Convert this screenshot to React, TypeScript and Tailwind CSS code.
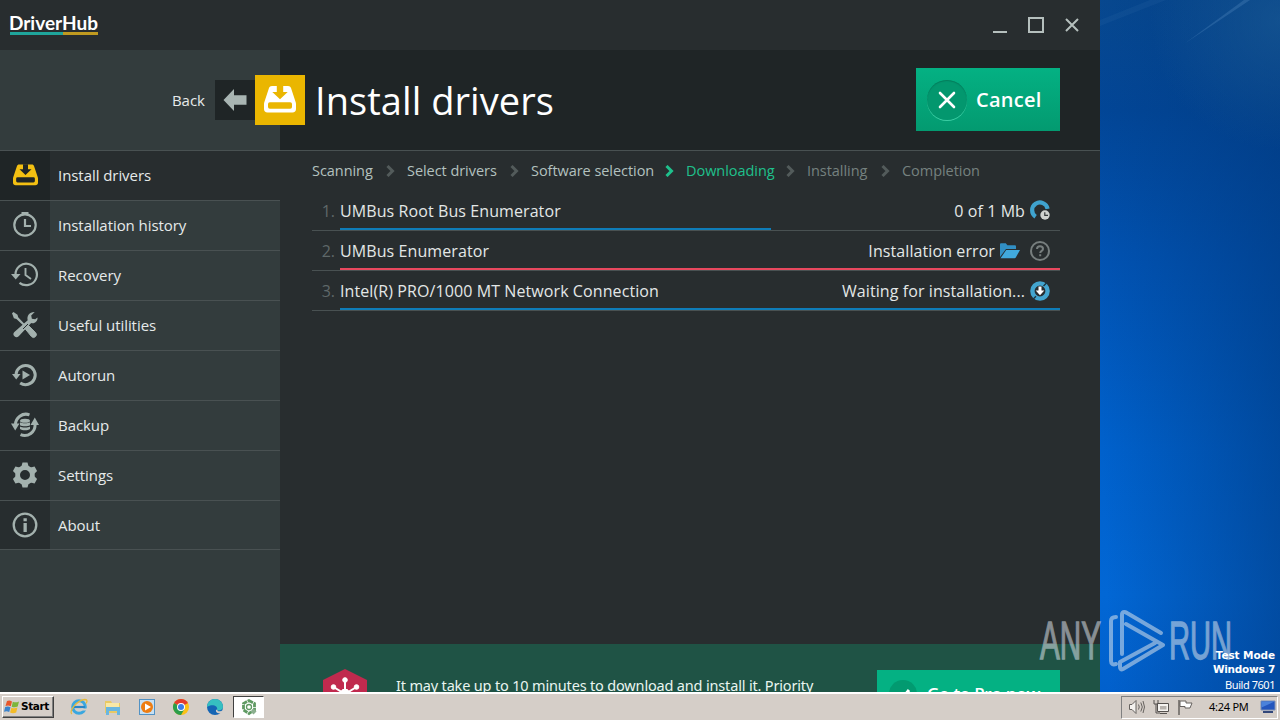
import { useId, type ReactNode } from "react";

/* ---------- icons ---------- */

function DriveIcon({ size = 26, arrow }: { size?: number; arrow: string }) {
  return (
    <svg width={size} height={size} viewBox="0 0 32 32" fill="currentColor">
      <path d="M8 2h16c1.600 0 2.600.7 3 2.100l4.700 14.100c.2.700.3 1.300.3 2V25c0 2.200-1.300 3.500-3.500 3.500h-25C1.300 28.500 0 27.200 0 25v-4.800c0-.7.1-1.300.3-2L5 4.100C5.400 2.700 6.400 2 8 2Z" />
      <path d="M12.800 1.500h6.400V8h4.500L16 15.300 8.300 8h4.500Z" fill={arrow} />
      <rect x="4" y="18.300" width="24" height="6.500" rx="1.800" fill={arrow} />
    </svg>
  );
}

function StopwatchIcon() {
  return (
    <svg width="26" height="26" viewBox="0 0 26 26" fill="none" stroke="currentColor" strokeWidth="2.200">
      <circle cx="13" cy="13" r="10.700" />
      <path d="M9.500 1.300h7" strokeWidth="2.600" />
      <path d="M13 7v7h6" />
    </svg>
  );
}

function RecoveryIcon() {
  return (
    <svg width="28" height="26" viewBox="0 0 28 26" fill="none" stroke="currentColor" strokeWidth="2.200">
      <path d="M4.500 12.500A10.700 10.700 0 1 1 8.500 20.800" />
      <path d="M0 12h9.500L4.700 17.500Z" fill="currentColor" stroke="none" />
      <path d="M14.500 6v7l5.500 4" strokeWidth="1.900" />
    </svg>
  );
}

function ToolsIcon() {
  return (
    <svg width="28" height="28" viewBox="0 0 28 28" fill="currentColor">
      <path d="M1 2.200 2.500 1l4 2.700.7 2.600 7 7.400-1.300 1.300-7.500-7-2.500-.8Z" />
      <path d="m14.200 17.800 3.300-3.300 7 7.100a2.800 2.800 0 0 1-4 4Z" stroke="currentColor" strokeWidth="1" />
      <path d="M26 6.500c.4 3.600-2.800 6.600-6.300 5.600L7.200 25.200a2.900 2.900 0 0 1-4.300-4.200L16.200 9.300C15 5 18 .9 23.200 1.100l-3.500 3.400.7 3.200 3.300.6Z" transform="translate(.5 0)" />
      <path d="m12 18 5-5" stroke="#272d2f" strokeWidth="1" />
    </svg>
  );
}

function AutorunIcon() {
  return (
    <svg width="26" height="26" viewBox="0 0 26 26" fill="none" stroke="currentColor" strokeWidth="3">
      <path d="M4 12.500A9.600 9.600 0 1 1 8.200 21" />
      <path d="M0 12h8.500L4.200 17.500Z" fill="currentColor" stroke="none" />
      <path d="M10.500 8.500v9l7.500-4.500Z" fill="currentColor" stroke="none" />
    </svg>
  );
}

function BackupIcon() {
  return (
    <svg width="28" height="26" viewBox="0 0 28 26" fill="none" stroke="currentColor" strokeWidth="3">
      <path d="M4.500 13A10.500 10.500 0 0 1 18.500 2.800" />
      <path d="M0 11.500h8.500L4.200 18.500Z" fill="currentColor" stroke="none" />
      <path d="M24 12A10.500 10.500 0 0 1 9.500 22.700" />
      <path d="M19.500 13H28l-4.200-7.500Z" fill="currentColor" stroke="none" />
      <g stroke="none" fill="currentColor">
        <ellipse cx="14" cy="8.800" rx="5" ry="2" />
        <path d="M9 10.300c2 1.300 8 1.300 10 0v3c-2 1.300-8 1.300-10 0Z" />
        <path d="M9 14.500c2 1.300 8 1.300 10 0v2.500c-2 1.700-8 1.700-10 0Z" />
      </g>
    </svg>
  );
}

function GearIcon() {
  const teeth = [0, 60, 120, 180, 240, 300];
  return (
    <svg width="26" height="26" viewBox="0 0 26 26">
      <g fill="currentColor">
        {teeth.map((a) => (
          <path key={a} d="M10.500.5h5l1.400 5H9.100Z" transform={`rotate(${a} 13 13)`} />
        ))}
      </g>
      <circle cx="13" cy="13" r="7.400" fill="none" stroke="currentColor" strokeWidth="4.800" />
    </svg>
  );
}

function InfoIcon() {
  return (
    <svg width="26" height="26" viewBox="0 0 26 26" fill="none" stroke="currentColor" strokeWidth="2.300">
      <circle cx="13" cy="13" r="11.300" />
      <path d="M11.500 6.300h3.300v3h-3.300zM11.500 11h3.300v9h-3.300z" fill="currentColor" stroke="none" />
    </svg>
  );
}

function QueueIcon() {
  return (
    <svg width="20" height="21" viewBox="0 0 20 21" fill="none">
      <path d="M5.600 16.800A7.800 7.800 0 1 1 17.600 8.800" stroke="#3fa3cf" strokeWidth="4.200" />
      <circle cx="15" cy="15" r="5.600" fill="#272d2f" />
      <circle cx="15" cy="15" r="4.700" fill="#cfd3d0" />
      <path d="M14.800 12.200V15.300H18" stroke="#33393a" strokeWidth="1.200" />
    </svg>
  );
}

function FolderIcon() {
  return (
    <svg width="20" height="16" viewBox="0 0 20 16">
      <path d="M0 14V1.500C0 .7.500.3 1.200.3h4.600l1.600 2h7.300c.8 0 1.300.5 1.300 1.200V6H6L0 14Z" fill="#318fc4" />
      <path d="M6.200 7H20l-4.200 7.500c-.3.500-.7.700-1.200.7H.500Z" fill="#41a9dd" />
    </svg>
  );
}

function HelpIcon() {
  return (
    <svg width="20" height="20" viewBox="0 0 20 20" fill="none" stroke="#777e7e" strokeWidth="2">
      <circle cx="10" cy="10" r="9" />
      <path d="M7 8c0-1.700 1.200-2.800 3-2.800s3 1.100 3 2.700c0 2-2.800 2-2.800 4.100M10.200 13.300v2" />
    </svg>
  );
}

function InstallWaitIcon() {
  return (
    <svg width="20" height="20" viewBox="0 0 20 20" fill="none">
      <circle cx="10" cy="10" r="7.600" stroke="#43a5cf" strokeWidth="4.400" />
      <path d="m13.500 5 3.500-3.500M3 18.300l3-3" stroke="#1e3540" strokeWidth="1.400" />
      <path d="M8.500 5.500h3v4h2.800L10 14.200 5.700 9.500h2.800Z" fill="#fff" />
    </svg>
  );
}

/* ---------- data ---------- */

const MENU: { label: string; icon: ReactNode }[] = [
  { label: "Install drivers", icon: <DriveIcon size={25} arrow="#1f2526" /> },
  { label: "Installation history", icon: <StopwatchIcon /> },
  { label: "Recovery", icon: <RecoveryIcon /> },
  { label: "Useful utilities", icon: <ToolsIcon /> },
  { label: "Autorun", icon: <AutorunIcon /> },
  { label: "Backup", icon: <BackupIcon /> },
  { label: "Settings", icon: <GearIcon /> },
  { label: "About", icon: <InfoIcon /> },
];

type StepState = "done" | "current" | "next";

const STEPS: { label: string; state: StepState; width: string }[] = [
  { label: "Scanning", state: "done", width: "w-[62px]" },
  { label: "Select drivers", state: "done", width: "w-[91px]" },
  { label: "Software selection", state: "done", width: "w-[122px]" },
  { label: "Downloading", state: "current", width: "w-[88px]" },
  { label: "Installing", state: "next", width: "w-[62px]" },
  { label: "Completion", state: "next", width: "w-[77px]" },
];

const STEP_TONE: Record<StepState, string> = {
  done: "text-[#b3c1bf]",
  current: "text-[#1fc08c]",
  next: "text-[#75817f]",
};

interface Driver {
  name: string;
  status: string;
  progress: number;
  bar: string;
  icons: ReactNode;
}

const DRIVERS: Driver[] = [
  {
    name: "UMBus Root Bus Enumerator",
    status: "0 of 1 Mb",
    progress: 431 / 720,
    bar: "bg-[#0e7cb8]",
    icons: <QueueIcon />,
  },
  {
    name: "UMBus Enumerator",
    status: "Installation error",
    progress: 1,
    bar: "bg-[#e8485e]",
    icons: (
      <>
        <FolderIcon />
        <span className="ml-2.5">
          <HelpIcon />
        </span>
      </>
    ),
  },
  {
    name: "Intel(R) PRO/1000 MT Network Connection",
    status: "Waiting for installation...",
    progress: 1,
    bar: "bg-[#0e7cb8]",
    icons: <InstallWaitIcon />,
  },
];

/* ---------- window ---------- */

function TitleBar() {
  return (
    <div className="flex h-[50px] shrink-0 items-start justify-between bg-[#282d2f]">
      <div className="ml-2.5 mt-[13px] w-[88px]">
        <div className="-ml-px h-[19px] whitespace-nowrap font-[Lato,sans-serif] text-[19px] font-bold leading-[19px] text-white">
          DriverHub
        </div>
        <div className="flex h-[3px]">
          <div className="w-[53px] bg-[#1fa59c]" />
          <div className="flex-1 bg-[#c09a20]" />
        </div>
      </div>
      <svg width="90" height="20" viewBox="0 0 90 20" className="mr-[18px] mt-[15px]" fill="none" stroke="#b5bfbd" strokeWidth="2">
        <path d="M1 17h14" />
        <path d="M37 3h14v14H37z" />
        <path d="m74 4 12 12M86 4 74 16" />
      </svg>
    </div>
  );
}

function PageHeader() {
  return (
    <div className="flex h-[101px] shrink-0 border-b border-[#495152]">
      <div className="flex w-[280px] items-center justify-end bg-[#333c3d]">
        <span className="mr-[10px] text-[15px] text-[#e6eaea]">Back</span>
        <div className="flex size-10 items-center justify-center bg-[#1f2526]">
          <svg width="24" height="22" viewBox="0 0 24 22" fill="#a8b5b2">
            <path d="M.5 11 11 0v6.200h12.500v9.600H11V22Z" />
          </svg>
        </div>
        <div className="z-10 -mr-[25px] flex size-[50px] shrink-0 items-center justify-center bg-[#eab600] text-white">
          <DriveIcon size={32} arrow="#eab600" />
        </div>
      </div>
      <div className="flex flex-1 items-center justify-between bg-[#1f2526] pb-px pl-[35px] pr-10">
        <h1 className="text-[38px] leading-[50px] tracking-[0.06px] text-white">Install drivers</h1>
        <button className="flex h-[63px] w-36 items-center bg-linear-to-b from-[#04b183] to-[#039a70] pl-[11px]">
          <span className="flex size-10 items-center justify-center rounded-full bg-[#03976e] shadow-[inset_0_1px_1px_#047d5c,0_1px_0_#3bcea4]">
            <svg width="18" height="18" viewBox="0 0 18 18" stroke="#fff" strokeWidth="2.600" strokeLinecap="round">
              <path d="m2 2 14 14M16 2 2 16" />
            </svg>
          </span>
          <span className="ml-[9px] text-[20px] font-semibold tracking-[0.25px] text-white">Cancel</span>
        </button>
      </div>
    </div>
  );
}

function Sidebar() {
  return (
    <nav className="w-[280px] shrink-0 bg-[#333c3d]">
      {MENU.map((item, i) => {
        const active = i === 0;
        return (
          <div
            key={item.label}
            className={`flex border-b border-[#495152] ${i === MENU.length - 1 ? "h-[49px]" : "h-[50px]"} ${active ? "bg-[#282d2f]" : ""}`}
          >
            <div
              className={`flex w-[50px] items-center justify-center pb-px ${active ? "bg-[#1f2526] text-[#f3c012]" : "bg-[#272d2f] text-[#a3b1ae]"}`}
            >
              {item.icon}
            </div>
            <span className="ml-2 text-[15px] leading-[49px] tracking-[-0.06px] text-[#e6eaea]">{item.label}</span>
          </div>
        );
      })}
    </nav>
  );
}

function Steps() {
  return (
    <div className="flex h-10 items-center text-[14.5px] tracking-[-0.05px]">
      {STEPS.map((s, i) => (
        <div key={s.label} className="flex items-center">
          {i > 0 && (
            <svg
              width="9"
              height="12"
              viewBox="0 0 9 12"
              className="mx-3"
              fill="none"
              stroke={s.state === "current" ? "#1fc08c" : "#535b5b"}
              strokeWidth="3"
            >
              <path d="m1.500 1 5 5-5 5" />
            </svg>
          )}
          <span className={`whitespace-nowrap ${s.width} ${STEP_TONE[s.state]}`}>{s.label}</span>
        </div>
      ))}
    </div>
  );
}

function DriverRow({ driver, index }: { driver: Driver; index: number }) {
  return (
    <li className="flex h-10 border-b border-[#495152] text-[16px] leading-10">
      <span className="w-[28px] pr-[5px] text-right text-[#5f6869]">{index}.</span>
      <div className="-mb-px flex flex-1 flex-col">
        <div className="flex h-[37px] items-center justify-between pr-[10px] pt-0.5 tracking-[0.09px] text-[#e3e7e7]">
          <span>{driver.name}</span>
          <div className="flex items-center">
            <span className="mr-[5px]">{driver.status}</span>
            {driver.icons}
          </div>
        </div>
        <div className={`h-0.5 ${driver.bar}`} style={{ width: `${driver.progress * 100}%` }} />
      </div>
    </li>
  );
}

function ProBanner() {
  return (
    <div className="flex h-12 overflow-hidden bg-[#1f5345]">
      <svg width="44" height="50" viewBox="0 0 44 50" className="ml-[43px] mt-[25px] shrink-0">
        <path d="M22 0 44 11v28L22 50 0 39V11Z" fill="#c02a4e" />
        <g fill="#fff" stroke="#fff">
          <circle cx="22" cy="11" r="2.300" />
          <circle cx="10.500" cy="18" r="2.300" />
          <circle cx="33.500" cy="18" r="2.300" />
          <path d="M22 11v14M10.500 18 22 25l11.500-7" fill="none" strokeWidth="2" />
          <circle cx="22" cy="24" r="4" />
        </g>
      </svg>
      <p className="ml-[29px] mt-[31px] w-[481px] shrink-0 whitespace-nowrap font-['Noto_Sans',sans-serif] text-[14.500px] leading-5 tracking-[-0.17px] text-[#e9f5f0]">
        It may take up to 10 minutes to download and install it. Priority
      </p>
      <div className="mt-[26px] flex h-[50px] w-[183px] shrink-0 bg-[#04b183] pl-3">
        <svg width="28" height="28" viewBox="0 0 28 28" className="mt-2.5">
          <circle cx="14" cy="14" r="14" fill="#029a70" />
          <path d="m6 16 5 5L20 10" fill="none" stroke="#fff" strokeWidth="3" />
        </svg>
        <span className="ml-[10px] mt-2.5 whitespace-nowrap text-[17px] font-semibold leading-7 tracking-[-0.25px] text-white">
          Go to Pro now
        </span>
      </div>
    </div>
  );
}

function DriverHubWindow() {
  return (
    <main className="flex h-full w-[1100px] flex-col overflow-hidden bg-[#282d2f] font-['Open_Sans',sans-serif]">
      <TitleBar />
      <PageHeader />
      <div className="flex min-h-0 flex-1">
        <Sidebar />
        <section className="flex flex-1 flex-col">
          <div className="flex-1 pl-8 pr-10">
            <Steps />
            <ol>
              {DRIVERS.map((d, i) => (
                <DriverRow key={d.name} driver={d} index={i + 1} />
              ))}
            </ol>
          </div>
          <ProBanner />
        </section>
      </div>
    </main>
  );
}

/* ---------- desktop ---------- */

function Wallpaper() {
  const id = useId();
  return (
    <svg className="h-[692px] w-[180px]" viewBox="0 0 180 692">
      <defs>
        <linearGradient id={`${id}v`} x1="0" y1="0" x2="0" y2="1">
          <stop offset="0" stopColor="#07488f" />
          <stop offset=".16" stopColor="#024697" />
          <stop offset=".38" stopColor="#0153b3" />
          <stop offset=".65" stopColor="#0061cc" />
          <stop offset=".86" stopColor="#0267d5" />
          <stop offset="1" stopColor="#0160cc" />
        </linearGradient>
        <linearGradient id={`${id}h`} x1="0" y1=".5" x2="1" y2=".4">
          <stop offset="0" stopColor="#013a80" stopOpacity="0" />
          <stop offset="1" stopColor="#013a80" stopOpacity=".62" />
        </linearGradient>
        <radialGradient id={`${id}g`} gradientUnits="userSpaceOnUse" cx="180" cy="20" r="130">
          <stop offset="0" stopColor="#1c5c95" stopOpacity=".6" />
          <stop offset="1" stopColor="#1c5c95" stopOpacity="0" />
        </radialGradient>
      </defs>
      <rect width="180" height="692" fill={`url(#${id}v)`} />
      <rect width="180" height="692" fill={`url(#${id}h)`} />
      <rect width="180" height="150" fill={`url(#${id}g)`} />
      <path d="M84 44 144 0h6Z" fill="#5a8fc4" opacity=".3" />
      <path d="M0 20 50 0h16L0 26Z" fill="#3f7ab5" opacity=".12" />
    </svg>
  );
}

function Watermark() {
  return (
    <svg
      className="absolute bottom-[45px] right-[45px]"
      width="200"
      height="70"
      viewBox="0 0 200 70"
      fontFamily="'Liberation Sans Narrow', 'Liberation Sans', sans-serif"
      fontSize="53"
      fill="#dfe7ee"
      opacity=".53"
    >
      <g stroke="#dfe7ee" strokeWidth="1.300">
        <text x="5" y="54" textLength="61" lengthAdjust="spacingAndGlyphs">
          ANY
        </text>
        <text x="134" y="54" textLength="63" lengthAdjust="spacingAndGlyphs">
          RUN
        </text>
      </g>
      <g fill="none" stroke="#dfe7ee" strokeWidth="4" strokeLinejoin="round" strokeLinecap="round">
        <path d="M81 12c-3 0-5 1-5 4v40c0 3 2 4 5 3" />
        <path d="M87 49V10c0-3 2-4 5-2l34 20" />
        <path d="M91 19 128 40 88 64c-2 1-3 0-3-2l0-5 35-19" />
      </g>
    </svg>
  );
}

function BuildInfo() {
  return (
    <div className="absolute bottom-[26px] right-[5px] text-right font-['DejaVu_Sans',sans-serif] text-[11px] text-white">
      <div className="text-[10.500px] font-bold leading-[14px] tracking-[-0.1px]">Test Mode</div>
      <div className="text-[10.500px] font-bold leading-[14px] tracking-[-0.25px]">Windows 7</div>
      <div className="font-['Noto_Sans',sans-serif] leading-[18px] tracking-[-0.45px]">Build 7601</div>
    </div>
  );
}

/* ---------- taskbar ---------- */

function QuickLaunch() {
  return (
    <div className="flex items-center gap-[14px]">
      {/* Internet Explorer */}
      <svg width="20" height="20" viewBox="0 0 20 20" fill="none">
        <circle cx="10" cy="10" r="6.300" stroke="#3aa7df" strokeWidth="3" />
        <path d="M5 10h11" stroke="#2a86c6" strokeWidth="2.200" />
        <path d="M12 12.500h6" stroke="#d5cec8" strokeWidth="2" />
        <path d="M3 17C-1 15 8 3 16 2.500c3 0 2 2.500 1 4" stroke="#e5b93c" strokeWidth="1.300" />
      </svg>
      {/* Explorer */}
      <svg width="20" height="20" viewBox="0 0 20 20">
        <path d="M2 4h6l1 2h8v10H2Z" fill="#e9c964" />
        <path d="M3 6h13v7H3Z" fill="#f8e8a6" />
        <path d="M3 10h14v8h-3v-4H6v4H3Z" fill="#69b6e0" />
      </svg>
      {/* Media Player */}
      <svg width="20" height="20" viewBox="0 0 20 20">
        <rect x="2.500" y="2.500" width="15" height="15" fill="#c7e0f3" stroke="#5292c4" />
        <circle cx="10" cy="10" r="6" fill="#ee7d12" />
        <path d="m8 6.500 6 3.500-6 3.500Z" fill="#fff" />
      </svg>
      {/* Chrome */}
      <svg width="20" height="20" viewBox="0 0 20 20">
        <circle cx="10" cy="10" r="8" fill="#fbc116" />
        <path d="M10 10 3.070 6a8 8 0 0 1 13.860 0Z" fill="#e33b2e" />
        <path d="M10 10 3.070 6A8 8 0 0 0 10 18l3.500-6Z" fill="#2c9d4b" />
        <circle cx="10" cy="10" r="4" fill="#fff" />
        <circle cx="10" cy="10" r="3" fill="#3b7de8" />
      </svg>
      {/* Edge */}
      <svg width="20" height="20" viewBox="0 0 20 20">
        <circle cx="10" cy="10" r="8" fill="#1565b4" />
        <path d="M2 10a8 8 0 0 1 16 0c0 3-4 4-6 3 1.500-4-5-6.500-10-3Z" fill="#36bfc0" />
        <path d="M12 13c-1 2 2 3 5 1.500" stroke="#d5cec8" strokeWidth="1.800" fill="none" />
      </svg>
    </div>
  );
}

function Taskbar() {
  return (
    <footer className="flex h-7 shrink-0 items-center border-t-2 border-white bg-[#d5cec8] font-['DejaVu_Sans',sans-serif] text-black">
      <button className="ml-0.5 flex h-[22px] w-[52px] items-center border border-b-[#404040] border-l-white border-r-[#404040] border-t-white pl-px shadow-[inset_-1px_-1px_0_#808080]">
        <svg width="16" height="16" viewBox="0 0 16 16">
          <path d="M3 2c2-1 3-.6 5 .4L6.800 7.300c-2-1-3.300-1-5.300-.2Z" fill="#e8562a" />
          <path d="M8.800 2.800c2 .8 4 .8 6.200-.3l-1.300 5c-2 1-4 1-6 .2Z" fill="#7db53a" />
          <path d="M1.200 8c2-.8 3.300-.8 5.300.2L5.200 13c-2-1-3.200-1-5.200-.2Z" fill="#3b83cc" />
          <path d="M7.400 8.700c2 .8 4 .8 6-.2l-1.200 4.900c-2 1-4 1-6.100.2Z" fill="#f3bb27" />
        </svg>
        <span className="ml-px text-[10.500px] font-bold tracking-[-0.4px]">Start</span>
      </button>
      <div className="ml-[15px]">
        <QuickLaunch />
      </div>
      <div className="ml-2 flex h-[22px] w-[31px] items-center justify-center border border-b-white border-l-[#404040] border-r-white border-t-[#404040] bg-white">
        <svg width="18" height="18" viewBox="0 0 18 18" fill="none" stroke="#5f9a62">
          <path d="M9 2.500 14.500 5.500v6.500L9 15.500 3.500 12V5.500Z" strokeWidth="2.800" strokeDasharray="4.500 .8" />
          <circle cx="9" cy="9" r="2.500" strokeWidth="1.300" />
          <path d="m10.500 13.500 3-3 3 3-3 3Z" fill="#8caf8f" stroke="none" />
        </svg>
      </div>
      <div className="ml-auto mr-0.5 flex h-[23px] w-[157px] items-center border border-b-white border-l-[#808080] border-r-white border-t-[#808080] pl-[6px]">
        <svg width="18" height="18" viewBox="0 0 18 18" fill="#f4f2ef" stroke="#66625f">
          <path d="M1.500 6.500h2.500L8 2.500v13L4 11.500H1.500Z" />
          <path d="M10.500 6.500q1.500 2.500 0 5M12.800 4.500q3 4.500 0 9M15 3q3 6 0 12" fill="none" />
        </svg>
        <svg width="18" height="18" viewBox="0 0 18 18" className="ml-[6px]" fill="#f4f2ef" stroke="#55514e">
          <path d="M5.500 5.500h11v8h-11z" />
          <path d="M8 8h6.500v3.500H8z" fill="#b7b2ad" stroke="none" />
          <path d="M8 15.500h7M2 2v4h4V2M4 6v9h4" fill="none" />
        </svg>
        <svg width="18" height="18" viewBox="0 0 18 18" className="ml-[6px]" fill="#fff" stroke="#66625f">
          <path d="M3 2v15" strokeWidth="1.500" />
          <path d="M4 3h6v2h6l-2 5H9V8.500H4Z" />
        </svg>
        <span className="ml-[15px] w-10 whitespace-nowrap font-['Noto_Sans',sans-serif] text-[11px] tracking-[-0.25px]">4:24 PM</span>
        <svg width="16" height="14" viewBox="0 0 16 14" className="ml-[11px]">
          <path d="M1 1h14v9H1Z" fill="#2456bd" stroke="#7b8eb5" />
          <path d="M1.500 1.500h13l-13 6Z" fill="#4b82db" />
          <path d="M3 11h10v2H3Z" fill="#32477a" />
        </svg>
      </div>
    </footer>
  );
}

export default function App() {
  return (
    <div className="relative flex h-[720px] w-[1280px] flex-col overflow-hidden">
      <div className="flex h-[692px]">
        <DriverHubWindow />
        <Wallpaper />
      </div>
      <Taskbar />
      <Watermark />
      <BuildInfo />
    </div>
  );
}
